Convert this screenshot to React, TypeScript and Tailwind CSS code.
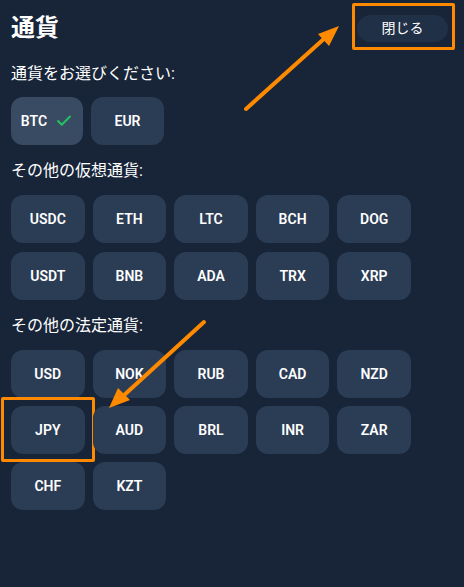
import { Check } from "lucide-react";

const crypto = ["USDC", "ETH", "LTC", "BCH", "DOG", "USDT", "BNB", "ADA", "TRX", "XRP"];
const fiat = ["USD", "NOK", "RUB", "CAD", "NZD", "JPY", "AUD", "BRL", "INR", "ZAR", "CHF", "KZT"];

function Chip({ code, active, marked }: { code: string; active?: boolean; marked?: boolean }) {
    return (
        <div className="relative">
            <button
                className={`w-full h-[48px] rounded-[12px] flex items-center justify-center gap-2 text-[14px] font-semibold text-white ${active ? "bg-[#394b63]" : "bg-[#2b3d55]"}`}
            >
                {code}
                {active && <Check className="w-[18px] h-[18px] text-[#22c55e]" strokeWidth={2.5} />}
            </button>
            {marked && (
                <div className="absolute -left-[10px] -top-[9px] -bottom-[8px] -right-[10px] border-[3px] border-[#ff8a00] rounded-[2px] pointer-events-none" />
            )}
        </div>
    );
}

export default function App() {
    return (
        <div
            className="relative w-[464px] h-[587px] bg-[#182538] text-white overflow-hidden"
            style={{ fontFamily: "Roboto, 'Noto Sans CJK JP', sans-serif" }}
        >
            <div className="flex items-start justify-between pl-[11px] pr-[16px] pt-[12px]">
                <h1 className="text-[24px] font-bold leading-[32px]">通貨</h1>
                <div className="relative mt-[3px]">
                    <button className="h-[27px] w-[91px] rounded-full bg-[#1f3047] text-[14px] text-white">
                        閉じる
                    </button>
                    <div className="absolute -left-[5px] -top-[12px] -right-[7px] -bottom-[8px] border-[3px] border-[#ff8a00] rounded-[2px]" />
                </div>
            </div>

            <div className="px-[11px]">
                <p className="mt-[20px] text-[16px] leading-[20px]">通貨をお選びください:</p>
                <div className="mt-[13px] flex gap-2">
                    <div className="w-[72px]"><Chip code="BTC" active /></div>
                    <div className="w-[73px]"><Chip code="EUR" /></div>
                </div>

                <p className="mt-[16px] text-[16px] leading-[20px]">その他の仮想通貨:</p>
                <div className="mt-[14px] grid grid-cols-5 gap-x-2 gap-y-[9px] w-[400px]">
                    {crypto.map((c) => (
                        <Chip key={c} code={c} />
                    ))}
                </div>

                <p className="mt-[16px] text-[16px] leading-[20px]">その他の法定通貨:</p>
                <div className="mt-[14px] grid grid-cols-5 gap-2 w-[400px]">
                    {fiat.map((c) => (
                        <Chip key={c} code={c} marked={c === "JPY"} />
                    ))}
                </div>
            </div>

            {/* annotation arrows */}
            <svg className="absolute inset-0 pointer-events-none" width="464" height="587">
                <line x1="246" y1="109" x2="326" y2="37" stroke="#ff8a00" strokeWidth="4" strokeLinecap="round" />
                <polygon points="339,26 329,46 318,34" fill="#ff8a00" />
                <line x1="204" y1="322" x2="122" y2="397" stroke="#ff8a00" strokeWidth="4" strokeLinecap="round" />
                <polygon points="109,408 118,388 130,400" fill="#ff8a00" />
            </svg>
        </div>
    );
}
